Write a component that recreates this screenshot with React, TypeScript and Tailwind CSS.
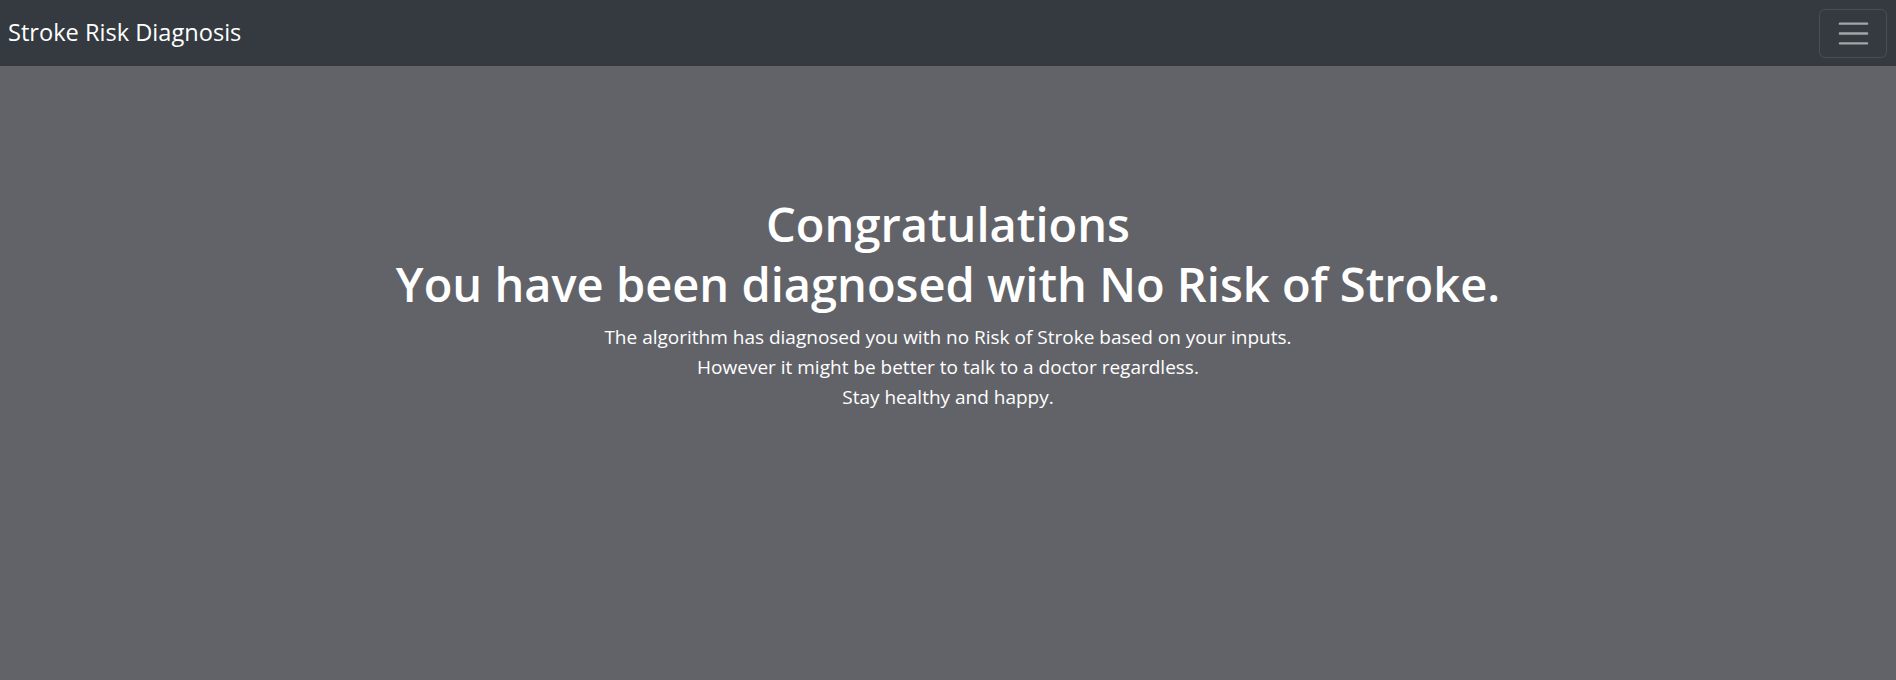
import { useState } from 'react';

function TogglerIcon() {
  return (
    <svg width="37" height="37" viewBox="0 0 30 30" fill="none">
      <path
        d="M4 7h22M4 15h22M4 23h22"
        stroke="rgba(255,255,255,0.55)"
        strokeWidth="2"
        strokeLinecap="round"
        strokeMiterlimit="10"
      />
    </svg>
  );
}

function Navbar() {
  const [open, setOpen] = useState(false);

  return (
    <nav className="flex h-[66px] items-center justify-between bg-[#343a40] pl-2 pr-[9px]">
      <a href="#" className="text-[23.6px] leading-[1.5] text-white">
        Stroke Risk Diagnosis
      </a>
      <button
        type="button"
        onClick={() => setOpen(!open)}
        aria-expanded={open}
        className="flex h-[49px] w-[68px] items-center justify-center rounded-[6px] border border-white/10"
      >
        <TogglerIcon />
      </button>
    </nav>
  );
}

export default function App() {
  return (
    <div className="min-h-[680px] bg-[#626369] font-['Open_Sans','Noto_Sans',sans-serif] text-white">
      <Navbar />
      <main className="flex flex-col items-center pt-[128px] text-center">
        <h1 className="mb-2 text-[47px] font-semibold leading-[60px]">
          Congratulations
          <br />
          You have been diagnosed with No Risk of Stroke.
        </h1>
        <p className="text-[19px] leading-[30px]">
          The algorithm has diagnosed you with no Risk of Stroke based on your inputs.
          <br />
          However it might be better to talk to a doctor regardless.
          <br />
          Stay healthy and happy.
        </p>
      </main>
    </div>
  );
}
